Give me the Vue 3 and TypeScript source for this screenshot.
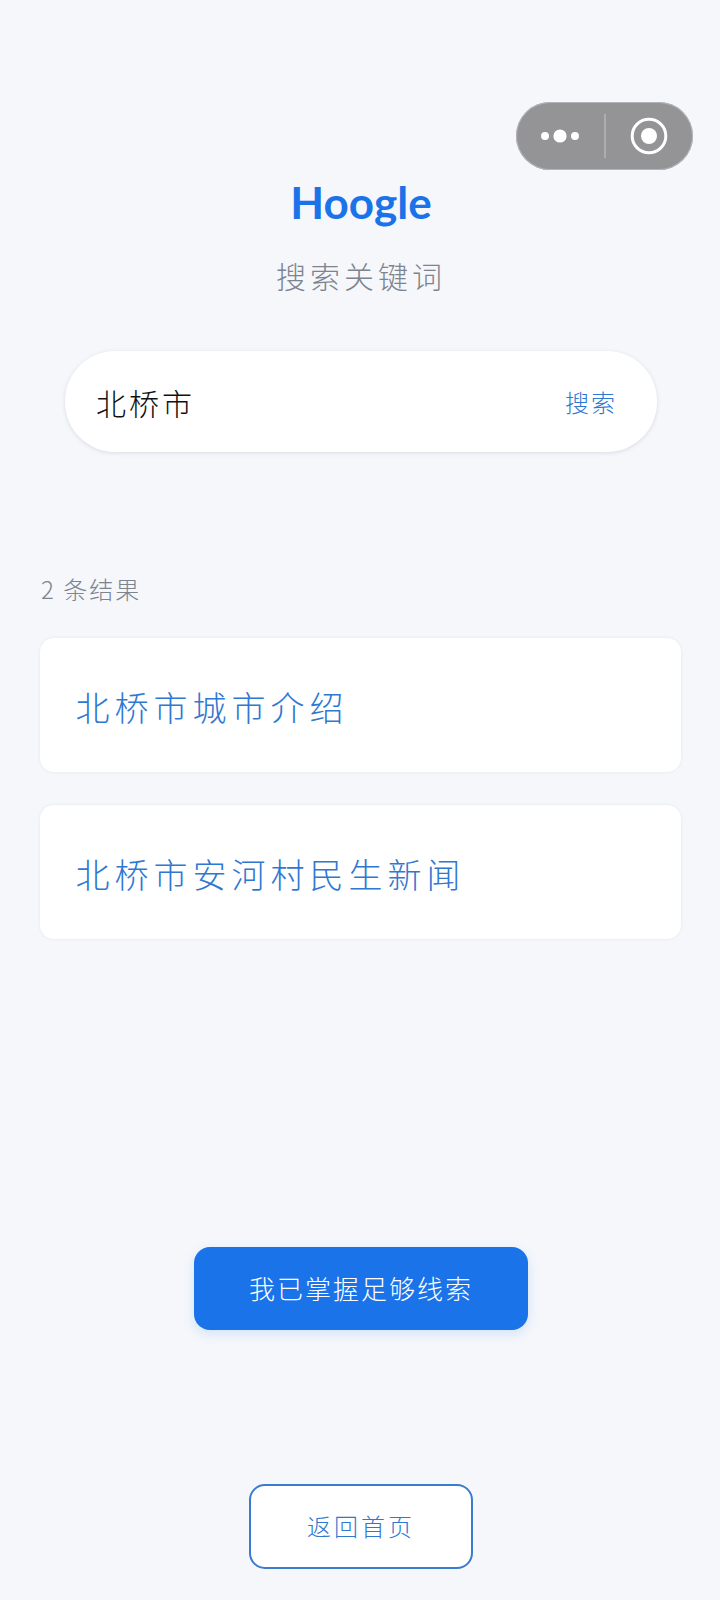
<script setup lang="ts">
const results = ['北桥市城市介绍', '北桥市安河村民生新闻'];
</script>

<template>
  <div class="page">
    <div class="capsule">
      <svg class="capsule-dots" width="44" height="16" viewBox="0 0 44 16">
        <circle cx="6" cy="8" r="4" fill="#fff" />
        <circle cx="21" cy="8" r="6.6" fill="#fff" />
        <circle cx="36" cy="8" r="4" fill="#fff" />
      </svg>
      <span class="capsule-line"></span>
      <svg class="capsule-target" width="38" height="38" viewBox="0 0 38 38">
        <circle cx="19" cy="19" r="16.8" fill="none" stroke="#fff" stroke-width="3" />
        <circle cx="19" cy="19" r="8" fill="#fff" />
      </svg>
    </div>

    <header class="head">
      <h1 class="title">Hoogle</h1>
      <p class="subtitle">搜索关键词</p>
    </header>

    <div class="search">
      <span class="search-input">北桥市</span>
      <span class="search-btn">搜索</span>
    </div>

    <p class="count">2 条结果</p>

    <ul class="list">
      <li v-for="item in results" :key="item" class="card">{{ item }}</li>
    </ul>

    <button class="primary" type="button">我已掌握足够线索</button>
    <button class="back" type="button">返回首页</button>
  </div>
</template>

<style scoped>
.page {
  position: relative;
  box-sizing: border-box;
  width: 720px;
  height: 1600px;
  padding: 166px 0 0 2px;
  background: #f5f7fb;
  display: flex;
  flex-direction: column;
  align-items: center;
  overflow: hidden;
  font-family: "Noto Sans CJK SC", "Noto Sans", sans-serif;
  font-weight: 300;
}

/* 小程序右上角胶囊 */
.capsule {
  position: absolute;
  top: 102px;
  left: 516px;
  box-sizing: border-box;
  width: 177px;
  height: 68px;
  border-radius: 34px;
  background: #949497;
  box-shadow: inset 0 0 0 1px #b4b4b8;
}
.capsule-dots {
  position: absolute;
  left: 23px;
  top: 26px;
}
.capsule-line {
  position: absolute;
  left: 88px;
  top: 12px;
  width: 2px;
  height: 44px;
  background: #adadb0;
}
.capsule-target {
  position: absolute;
  left: 114px;
  top: 15px;
}

.head {
  display: flex;
  flex-direction: column;
  align-items: center;
}
.title {
  margin: 0;
  font-family: "Lato", "Noto Sans", sans-serif;
  font-size: 44px;
  line-height: 72px;
  font-weight: 700;
  color: #1a73e8;
}
.subtitle {
  margin: 16px 0 0;
  font-size: 30px;
  line-height: 42px;
  letter-spacing: 4px;
  color: #7d8490;
}

.search {
  box-sizing: border-box;
  width: 592px;
  height: 101px;
  margin-top: 55px;
  padding: 0 40px 0 31px;
  background: #fff;
  border-radius: 50px;
  box-shadow: 0 1px 4px rgba(60, 70, 90, 0.15);
  display: flex;
  align-items: center;
  justify-content: space-between;
}
.search-input {
  font-size: 30px;
  letter-spacing: 3px;
  color: #111;
}
.search-btn {
  font-size: 24px;
  letter-spacing: 2px;
  color: #2f78d2;
}

.count {
  align-self: flex-start;
  margin: 119px 0 0 39px;
  font-size: 24px;
  line-height: 36px;
  letter-spacing: 2px;
  color: #7d8490;
}

.list {
  list-style: none;
  margin: 31px 2px 0 0;
  padding: 0;
  display: flex;
  flex-direction: column;
  gap: 33px;
}
.card {
  box-sizing: border-box;
  width: 641px;
  height: 134px;
  padding: 2px 0 0 36px;
  background: #fff;
  border-radius: 14px;
  box-shadow: 0 0 3px rgba(60, 70, 90, 0.1);
  display: flex;
  align-items: center;
  font-size: 34px;
  letter-spacing: 5px;
  color: #2f78d2;
}

.primary,
.back {
  box-sizing: border-box;
  font-family: inherit;
  font-weight: 300;
  letter-spacing: 2px;
  display: block;
}
.primary {
  width: 334px;
  height: 83px;
  margin-top: 308px;
  padding-bottom: 4px;
  border: none;
  border-radius: 16px;
  background: #1a73e8;
  color: #fff;
  font-size: 26px;
  box-shadow: 0 4px 12px rgba(26, 115, 232, 0.15);
}
.back {
  width: 224px;
  height: 85px;
  margin-top: 154px;
  padding-bottom: 3px;
  border: 2px solid #3a7bd0;
  border-radius: 16px;
  background: #fff;
  color: #2f78d2;
  font-size: 24px;
  letter-spacing: 3px;
}
</style>
